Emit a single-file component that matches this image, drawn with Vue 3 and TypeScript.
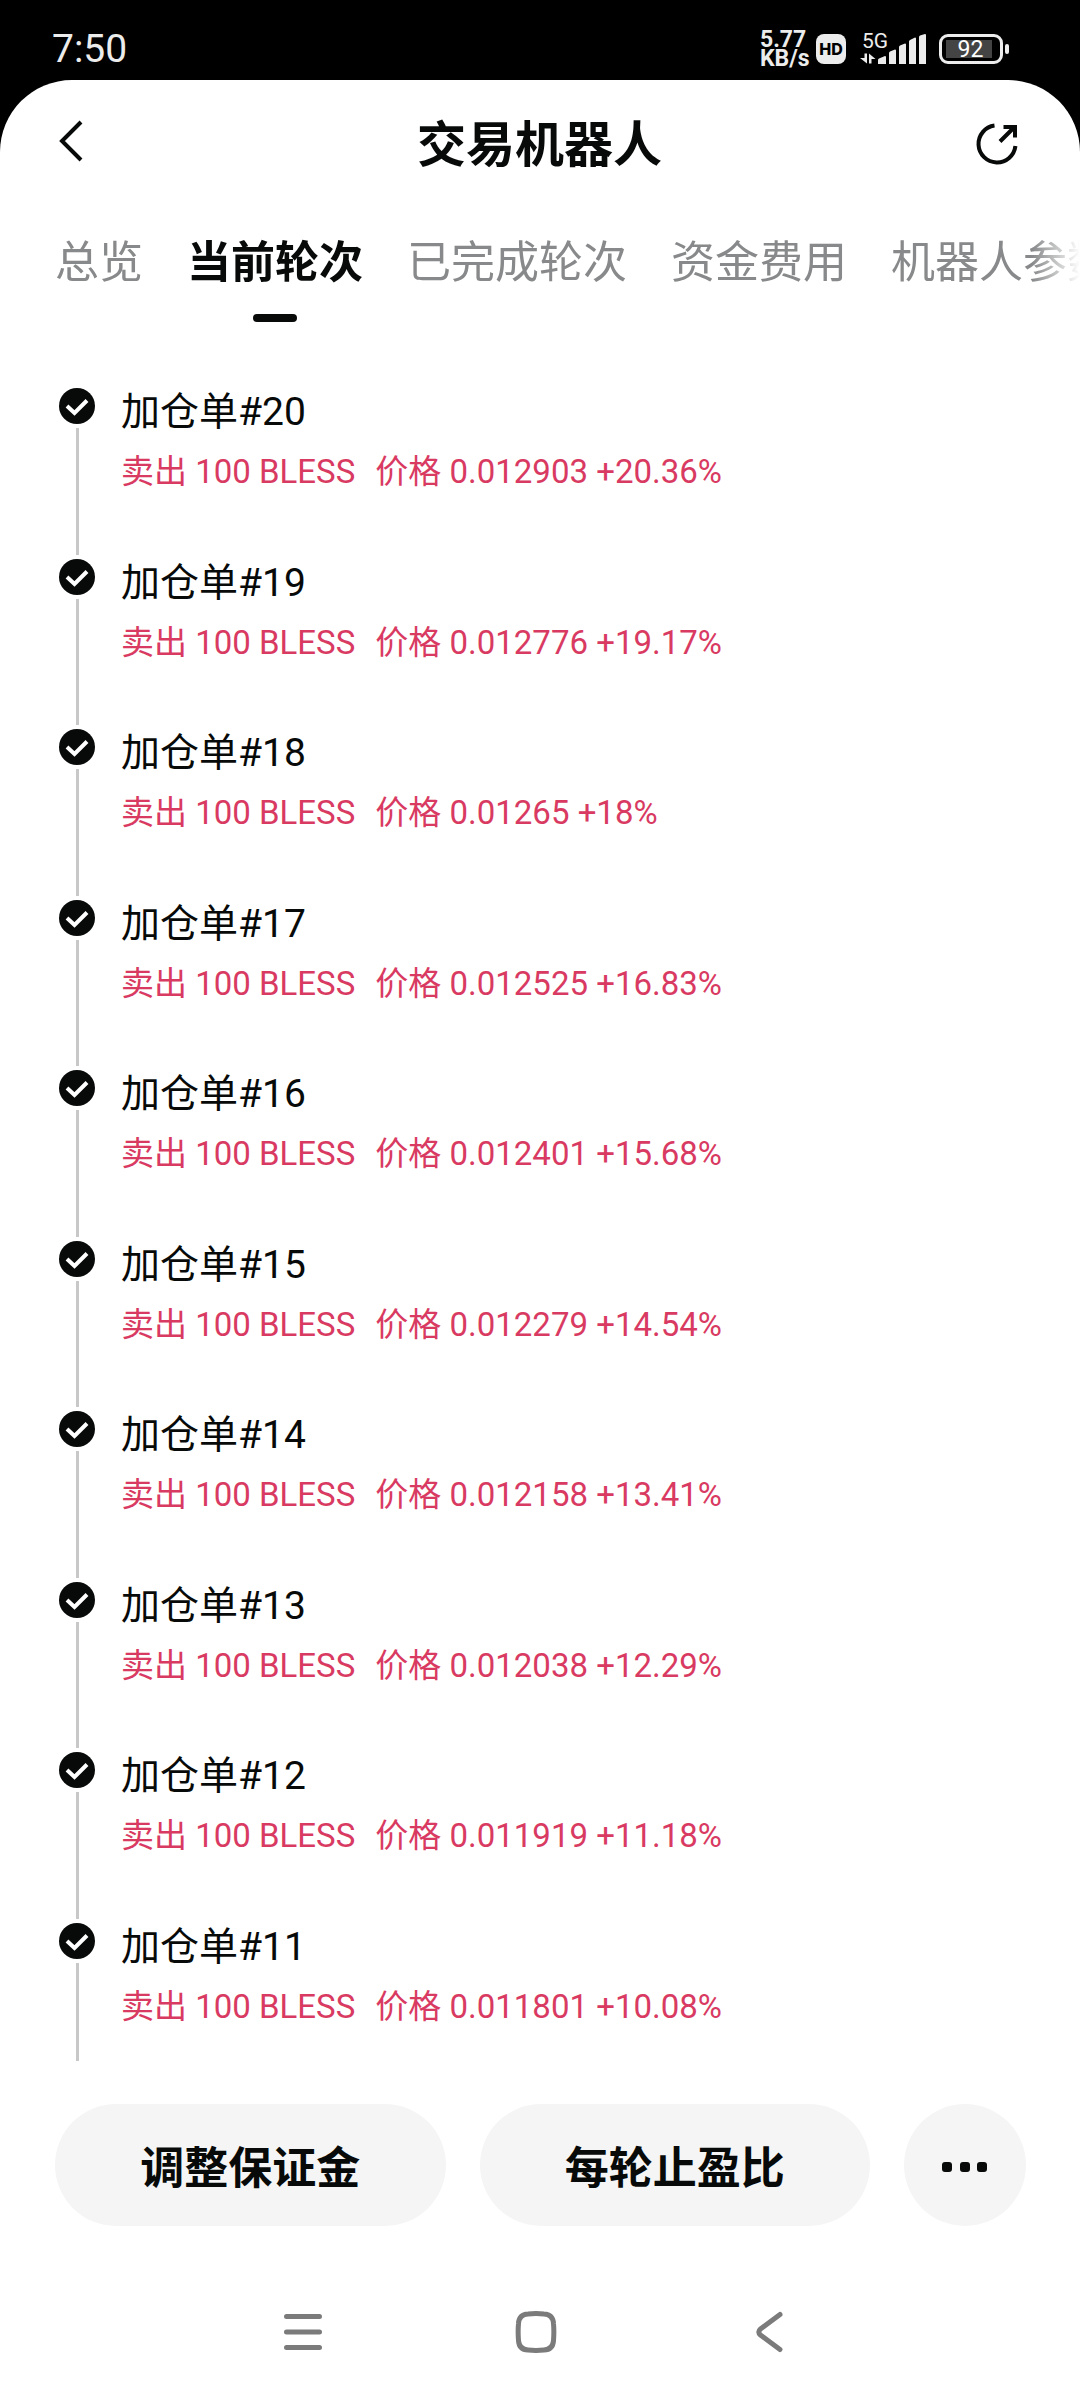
<script setup lang="ts">
interface Order {
  no: number
  price: string
  change: string
}

const tabs: string[] = ['总览', '当前轮次', '已完成轮次', '资金费用', '机器人参数']
const activeTab = '当前轮次'

const orders: Order[] = [
  { no: 20, price: '0.012903', change: '+20.36%' },
  { no: 19, price: '0.012776', change: '+19.17%' },
  { no: 18, price: '0.01265', change: '+18%' },
  { no: 17, price: '0.012525', change: '+16.83%' },
  { no: 16, price: '0.012401', change: '+15.68%' },
  { no: 15, price: '0.012279', change: '+14.54%' },
  { no: 14, price: '0.012158', change: '+13.41%' },
  { no: 13, price: '0.012038', change: '+12.29%' },
  { no: 12, price: '0.011919', change: '+11.18%' },
  { no: 11, price: '0.011801', change: '+10.08%' },
]
</script>

<template>
  <div class="screen">
    <div class="status">
      <span class="clock">7:50</span>
      <div class="indicators">
        <div class="speed"><span>5.77</span><span>KB/s</span></div>
        <span class="hd">HD</span>
        <div class="signal">
          <span class="network">5G</span>
          <svg width="66" height="30" viewBox="0 0 66 30" fill="#ececec" aria-hidden="true">
            <path d="M4.500 19.500h2.500v10l-7-5.500h4.500zM9 29.500v-10l6.500 5.500h-4v4.500z" />
            <path d="M18 30v-4q0-1 1-1.500l6-2.500q1 0 1 1v7zM29 30v-11q0-1 1-1.500l5-2q1 0 1 1V30zM39 30V13q0-1 1-1.500l5-2q1 0 1 1V30zM49 30V7.500q0-1 1-1.500l5-2.500q1 0 1 1V30zM59 30V3q0-1 1-1.500L65 0q1 0 1 1v29z" />
          </svg>
        </div>
        <div class="battery">
          <div class="cell"><span class="level">92</span></div>
          <span class="nub"></span>
        </div>
      </div>
    </div>

    <main class="sheet">
      <header class="header">
        <button class="icon-button" type="button" aria-label="返回">
          <svg width="42" height="48" viewBox="0 0 42 48" fill="none" stroke="#080a0a" stroke-width="4" aria-hidden="true">
            <path d="M26 2 7 21l19 19" />
          </svg>
        </button>
        <h1 class="title">交易机器人</h1>
        <button class="icon-button" type="button" aria-label="分享">
          <svg width="42" height="42" viewBox="0 0 42 42" fill="none" stroke="#080a0a" stroke-width="4" aria-hidden="true">
            <path d="M18.500 2.600A18.500 18.500 0 1 0 39.400 23" />
            <path d="M24 18.500 38.500 4M27.500 4h11.500M39 2v12.500" />
          </svg>
        </button>
      </header>

      <nav class="tabs">
        <button
          v-for="tab in tabs"
          :key="tab"
          type="button"
          class="tab"
          :class="{ active: tab === activeTab }"
        >
          {{ tab }}
        </button>
      </nav>

      <section class="scroller">
        <ol class="timeline">
          <li v-for="order in orders" :key="order.no" class="entry">
            <div class="marker">
              <svg width="36" height="36" viewBox="0 0 36 36" fill="none" aria-hidden="true">
                <circle cx="18" cy="18" r="18" fill="#080a0a" />
                <path d="m8 18 7.500 7L28 12.500" stroke="#fff" stroke-width="4" />
              </svg>
              <span class="line"></span>
            </div>
            <div class="body">
              <h2 class="name">加仓单#{{ order.no }}</h2>
              <p class="detail">
                <span>卖出 100 BLESS</span>
                <span>价格 {{ order.price }} {{ order.change }}</span>
              </p>
            </div>
          </li>
        </ol>
      </section>

      <footer class="actions">
        <button type="button" class="pill">调整保证金</button>
        <button type="button" class="pill">每轮止盈比</button>
        <button type="button" class="more" aria-label="更多">
          <svg width="46" height="10" viewBox="0 0 46 10" fill="#080a0a" aria-hidden="true">
            <rect width="10" height="10" rx="3" />
            <rect x="18" width="10" height="10" rx="3" />
            <rect x="35" width="10" height="10" rx="3" />
          </svg>
        </button>
      </footer>

      <nav class="system">
        <button type="button" aria-label="最近任务">
          <svg width="42" height="42" viewBox="0 0 42 42" fill="none" stroke="#7b7b7b" stroke-width="5" stroke-linecap="round" aria-hidden="true">
            <path d="M4.500 5.500h33M4.500 21h33M4.500 36.500h33" />
          </svg>
        </button>
        <button type="button" aria-label="主屏幕">
          <svg width="42" height="42" viewBox="0 0 42 42" fill="none" stroke="#7b7b7b" stroke-width="5" aria-hidden="true">
            <path d="M13 3q8-.8 16 0 9 .5 9.500 9.500.7 8.500 0 17-.5 9-9.500 9.500-8 .8-16 0-9-.5-9.500-9.500-.7-8.500 0-17Q4 3.500 13 3z" />
          </svg>
        </button>
        <button type="button" aria-label="后退">
          <svg width="42" height="42" viewBox="0 0 42 42" fill="none" stroke="#7b7b7b" stroke-width="5" stroke-linecap="round" aria-hidden="true">
            <path d="M32 3.500 12.500 18q-3.500 3 0 6L32 38.500" />
          </svg>
        </button>
      </nav>
    </main>
  </div>
</template>

<style>
body {
  background: #000;
}
</style>

<style scoped>
.screen {
  display: flex;
  flex-direction: column;
  min-height: 100vh;
  background: #000;
  color: #080a0a;
  font-family: Roboto, "Noto Sans CJK SC", sans-serif;
}

button {
  padding: 0;
  border: 0;
  background: none;
  color: inherit;
  font: inherit;
}

svg {
  display: block;
}

.status {
  display: flex;
  justify-content: space-between;
  align-items: center;
  height: 80px;
  padding: 18px 71px 0 52px;
  box-sizing: border-box;
  color: #ececec;
}

.clock {
  font-size: 39px;
  line-height: 48px;
}

.indicators {
  display: flex;
  align-items: center;
}

.speed {
  display: flex;
  flex-direction: column;
  width: 56px;
  font-size: 23px;
  font-weight: 700;
  line-height: 19px;
}

.hd {
  width: 30px;
  margin-right: 14px;
  border-radius: 8px;
  background: #ececec;
  color: #000;
  font-family: Inter, sans-serif;
  font-size: 16px;
  font-weight: 800;
  line-height: 30px;
  text-align: center;
}

.signal {
  position: relative;
  margin-right: 13px;
}

.network {
  position: absolute;
  top: -5px;
  left: 2px;
  font-size: 21px;
  line-height: 24px;
}

.battery {
  display: flex;
  align-items: center;
  gap: 2px;
}

.cell {
  width: 64px;
  height: 30px;
  padding: 3px 8px 3px 4px;
  box-sizing: border-box;
  border: 3px solid #ececec;
  border-radius: 9px;
}

.level {
  display: block;
  height: 18px;
  padding-left: 3px;
  background: #444;
  color: #fff;
  font-size: 23px;
  line-height: 20px;
  text-align: center;
}

.nub {
  width: 4px;
  height: 10px;
  border-radius: 2px;
  background: #ececec;
}

.sheet {
  display: flex;
  flex: 1;
  flex-direction: column;
  border-radius: 72px 72px 0 0;
  background: #fff;
}

.header {
  display: flex;
  justify-content: space-between;
  align-items: center;
  height: 128px;
  padding: 0 62px 0 55px;
}

.title {
  margin: 0;
  padding: 4px 0 0 6px;
  font-size: 49px;
  font-weight: 700;
  line-height: 64px;
}

.tabs {
  display: flex;
  gap: 44px;
  padding: 25px 0 0 55px;
  overflow: hidden;
  mask-image: linear-gradient(to left, transparent, #000 48px);
}

.tab {
  display: flex;
  flex: none;
  flex-direction: column;
  align-items: center;
  gap: 21px;
  color: #88898a;
  font-size: 44px;
  line-height: 60px;
  white-space: nowrap;
}

.tab::after {
  content: "";
  width: 44px;
  height: 8px;
  border-radius: 4px;
}

.tab.active {
  color: #080a0a;
  font-weight: 700;
}

.tab.active::after {
  background: #080a0a;
}

/* The last entry runs on under the action bar. */
.scroller {
  display: flex;
  flex: 1;
  flex-direction: column;
  padding-top: 66px;
  overflow: hidden;
}

.timeline {
  display: flex;
  flex: 1;
  flex-direction: column;
  margin: 0 0 -32px;
  padding: 0 59px;
  list-style: none;
}

.entry {
  display: flex;
  flex: 1;
  gap: 26px;
  min-height: 150px;
}

.marker {
  display: flex;
  flex-direction: column;
  align-items: center;
  gap: 4px;
  padding-bottom: 4px;
}

.line {
  flex: 1;
  width: 3px;
  background: #c8c8c8;
}

.name {
  margin: 0 0 12px;
  font-size: 39px;
  font-weight: 400;
  line-height: 48px;
}

.detail {
  display: flex;
  flex-wrap: wrap;
  column-gap: 20px;
  margin: 0;
  color: #d93a62;
  font-size: 33px;
  line-height: 48px;
}

.actions {
  display: flex;
  gap: 34px;
  padding: 43px 54px 38px 55px;
}

.pill {
  flex: 1;
  height: 122px;
  border-radius: 61px;
  background: #f5f5f5;
  font-size: 44px;
  font-weight: 700;
}

.more {
  display: grid;
  place-items: center;
  width: 122px;
  height: 122px;
  padding-top: 4px;
  border-radius: 50%;
  background: #f5f5f5;
}

.system {
  display: flex;
  justify-content: center;
  height: 136px;
  padding-right: 8px;
}

.system button {
  display: grid;
  place-items: center;
  width: 233px;
}
</style>
